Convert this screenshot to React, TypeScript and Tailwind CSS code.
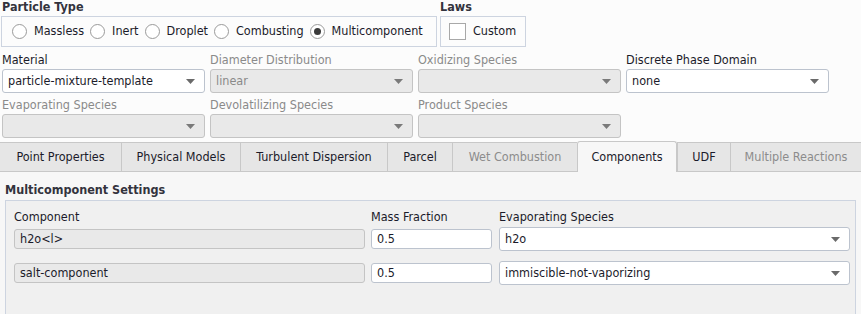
import { ReactNode } from 'react';

const font = { fontFamily: '"DejaVu Sans Condensed", "Liberation Sans", sans-serif' };

function Caret({ muted }: { muted?: boolean }) {
  return (
    <svg width="9" height="5" viewBox="0 0 9 5" className="shrink-0">
      <path d="M0 0 H9 L4.5 5 Z" fill={muted ? '#7a7a7a' : '#6a6a6a'} />
    </svg>
  );
}

function Dropdown({ value, disabled, width = 'w-[203px]' }: { value?: string; disabled?: boolean; width?: string }) {
  return (
    <div
      className={`${width} h-[24px] rounded-[3px] border flex items-center justify-between pl-[5px] pr-[9px] ${
        disabled ? 'bg-[#e9e9e9] border-[#c4c4c4] text-[#8a8a8a]' : 'bg-white border-[#bcc3ce] text-[#1b1b2a]'
      }`}
    >
      <span>{value ?? ''}</span>
      <Caret muted={disabled} />
    </div>
  );
}

function Field({ label, disabled, children }: { label: string; disabled?: boolean; children: ReactNode }) {
  return (
    <div className="flex flex-col">
      <div className={`h-[16px] leading-[14px] ${disabled ? 'text-[#8a8a8a]' : 'text-[#1b1b2a]'}`}>{label}</div>
      {children}
    </div>
  );
}

function Radio({ label, checked }: { label: string; checked?: boolean }) {
  return (
    <div className="flex items-center gap-[7px]">
      <span className="w-[15px] h-[15px] rounded-full border border-[#9a9a9a] bg-white flex items-center justify-center">
        {checked && <span className="w-[7px] h-[7px] rounded-full bg-[#3a3a3a]" />}
      </span>
      <span>{label}</span>
    </div>
  );
}

const tabs = [
  { name: 'Point Properties', w: 'w-[121px]' },
  { name: 'Physical Models', w: 'w-[119px]' },
  { name: 'Turbulent Dispersion', w: 'w-[147px]' },
  { name: 'Parcel', w: 'w-[65px]' },
  { name: 'Wet Combustion', w: 'w-[125px]', disabled: true },
  { name: 'Components', w: 'w-[100px]', active: true },
  { name: 'UDF', w: 'w-[53px]' },
  { name: 'Multiple Reactions', w: 'w-[131px]', disabled: true },
];

const components = [
  { name: 'h2o<l>', fraction: '0.5', species: 'h2o' },
  { name: 'salt-component', fraction: '0.5', species: 'immiscible-not-vaporizing' },
];

export default function App() {
  return (
    <div className="w-[861px] h-[314px] overflow-hidden bg-[#fcfcfc] text-[12.5px] text-[#1b1b2a]" style={font}>
      <div className="flex gap-[3px] pl-[1px]">
        <div className="flex flex-col">
          <div className="h-[16px] leading-[14px] pl-[1px] font-bold text-[#33333d]">Particle Type</div>
          <div className="w-[436px] h-[31px] border border-[#cdd4e0] flex items-center gap-[6px] pl-[10px]">
            <Radio label="Massless" />
            <Radio label="Inert" />
            <Radio label="Droplet" />
            <Radio label="Combusting" />
            <Radio label="Multicomponent" checked />
          </div>
        </div>
        <div className="flex flex-col">
          <div className="h-[16px] leading-[14px] font-bold text-[#33333d]">Laws</div>
          <div className="w-[86px] h-[31px] border border-[#cdd4e0] flex items-center gap-[7px] pl-[8px]">
            <span className="w-[17px] h-[17px] border border-[#a8a8a8] bg-white" />
            <span>Custom</span>
          </div>
        </div>
      </div>

      <div className="flex flex-col gap-[5px] pl-[2px] mt-[6px]">
        <div className="flex gap-[5px]">
          <Field label="Material">
            <Dropdown value="particle-mixture-template" />
          </Field>
          <Field label="Diameter Distribution" disabled>
            <Dropdown value="linear" disabled />
          </Field>
          <Field label="Oxidizing Species" disabled>
            <Dropdown disabled />
          </Field>
          <Field label="Discrete Phase Domain">
            <Dropdown value="none" />
          </Field>
        </div>
        <div className="flex gap-[5px]">
          <Field label="Evaporating Species" disabled>
            <Dropdown disabled />
          </Field>
          <Field label="Devolatilizing Species" disabled>
            <Dropdown disabled />
          </Field>
          <Field label="Product Species" disabled>
            <Dropdown disabled />
          </Field>
        </div>
      </div>

      <div className="flex items-end h-[31px] mt-[3px]">
        {tabs.map((t) => (
          <div
            key={t.name}
            className={`${t.w} flex items-center justify-center border-t border-l border-[#c8c8c8] first:border-l-0 ${
              t.active ? 'h-[31px] bg-[#f7f7f7] rounded-t-[3px] border-r' : 'h-[30px] bg-[#e6e6e6] border-b'
            } ${t.disabled ? 'text-[#8c8c8c]' : 'text-[#1b1b2a]'}`}
          >
            {t.name}
          </div>
        ))}
      </div>

      <div className="bg-[#f7f7f7] h-[200px] px-[5px] pt-[10px]">
        <div className="h-[18px] leading-[16px] font-bold text-[#33333d]">Multicomponent Settings</div>
        <div className="border border-[#cdd4e0] bg-[#f0f0f0] h-[200px] pl-[8px] pt-[7px]">
          <div className="flex h-[18px] leading-[18px]">
            <div className="w-[357px]">Component</div>
            <div className="w-[128px]">Mass Fraction</div>
            <div>Evaporating Species</div>
          </div>
          <div className="flex flex-col gap-[10px] mt-[1px]">
            {components.map((c) => (
              <div key={c.name} className="flex items-center">
                <div className="w-[351px] h-[20px] rounded-[3px] border border-[#c4c4c4] bg-[#e9e9e9] pl-[5px] leading-[18px] mr-[6px]">
                  {c.name}
                </div>
                <div className="w-[121px] h-[20px] rounded-[3px] border border-[#bcc3ce] bg-white pl-[5px] leading-[18px] mr-[7px]">
                  {c.fraction}
                </div>
                <Dropdown value={c.species} width="w-[351px] h-[23px]" />
              </div>
            ))}
          </div>
        </div>
      </div>
    </div>
  );
}
